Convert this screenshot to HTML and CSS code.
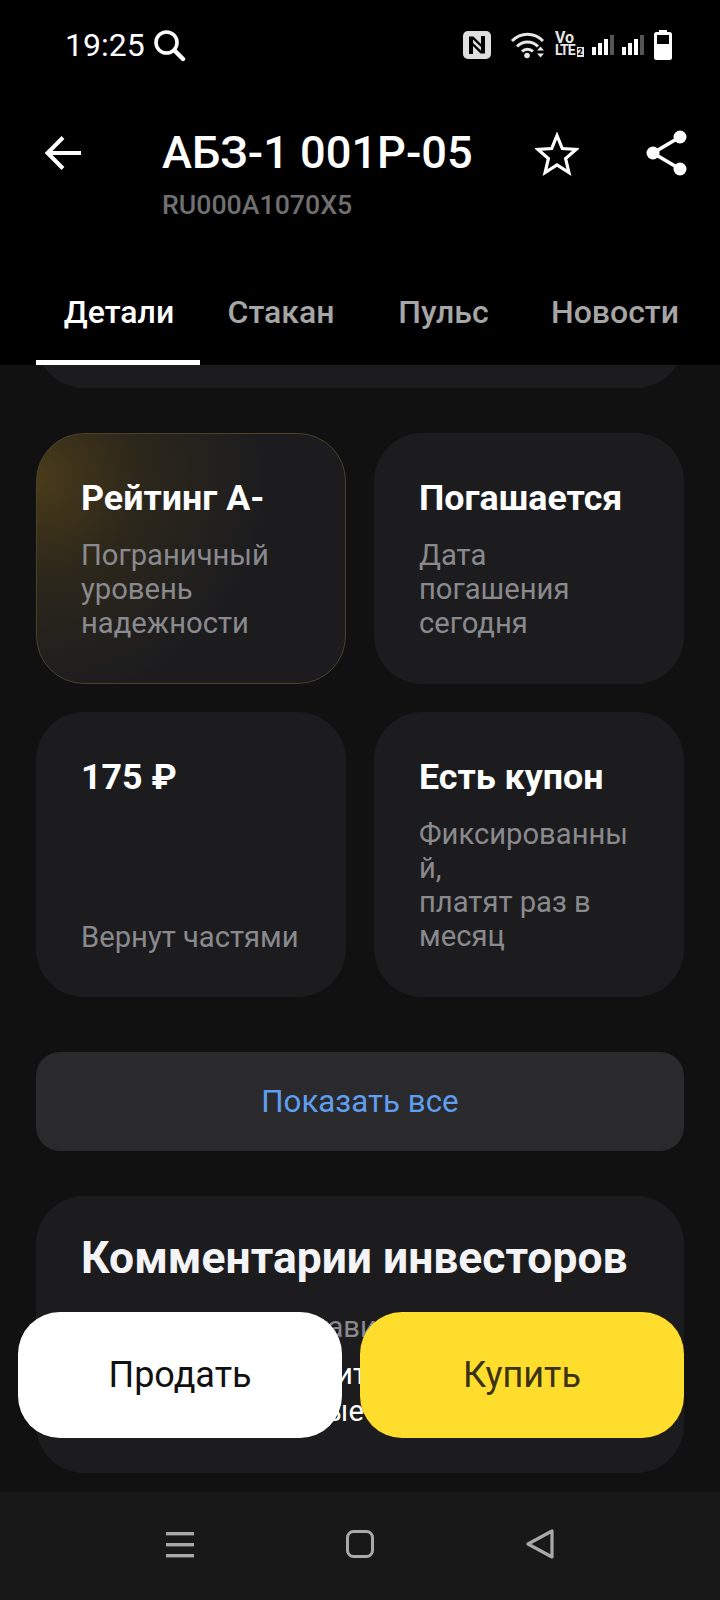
FILE: index.html
```html
<!DOCTYPE html>
<html lang="ru">

<head>
    <meta charset="UTF-8">
    <meta name="viewport" content="width=device-width, initial-scale=1.0">
    <title>АБЗ-1 001Р-05</title>
    <link rel="stylesheet" href="styles.css">
</head>

<body>
    <div class="phone">
        <header class="top">
            <div class="status-bar">
                <div class="status-left">
                    <span class="clock">19:25</span>
                    <svg class="icon-search" width="34" height="34" viewBox="0 0 34 34" fill="none" stroke="#fff" stroke-linecap="round">
                        <circle cx="14.5" cy="14.5" r="10.5" stroke-width="3.6"/>
                        <path d="M22.5 22.5L31 31" stroke-width="4.4"/>
                    </svg>
                </div>
                <div class="status-right">
                    <svg class="icon-nfc" width="28" height="28" viewBox="0 0 28 28">
                        <rect width="28" height="28" rx="5" fill="#dedede"/>
                        <path d="M6 23V5.500h4.500L18 13v3L10 8.500V23zM22 5v17.500h-4.500L10 15v-3l8 7.500V5z" fill="#000"/>
                    </svg>
                    <svg class="icon-wifi" width="35" height="30" viewBox="0 0 35 30" fill="none" stroke="#e6e6e6" stroke-width="3">
                        <path d="M2 11C11 2 24 2 33 11"/>
                        <path d="M7 16.500C13 10.500 22 10.500 28 16.500"/>
                        <path d="M12 21.500C15 18.500 20 18.500 23 21.500"/>
                        <circle cx="17" cy="25.500" r="2.800" fill="#e6e6e6" stroke="none"/>
                        <path d="M27 20.500L30.500 16.500L34 20.500zM27 23.500H34L30.500 27.500z" fill="#e6e6e6" stroke="none"/>
                    </svg>
                    <div class="volte">
                        <span class="vo">Vo</span>
                        <span class="lte">LTE<b>2</b></span>
                    </div>
                    <div class="signal"><i class="s1"></i><i class="s2"></i><i class="s3"></i><i class="s4"></i></div>
                    <div class="signal"><i class="s1"></i><i class="s2"></i><i class="s3"></i><i class="s4"></i></div>
                    <svg class="icon-battery" width="18" height="30" viewBox="0 0 18 30">
                        <path d="M5 0h8v2h2.500A2.500 2.500 0 0 1 18 4.500V27.500A2.500 2.500 0 0 1 15.500 30H2.500A2.500 2.500 0 0 1 0 27.500V4.500A2.500 2.500 0 0 1 2.500 2H5z" fill="#fff"/>
                        <rect x="3" y="5" width="12" height="9" fill="#000"/>
                    </svg>
                </div>
            </div>

            <div class="title-row">
                <svg class="icon-back" width="38" height="36" viewBox="0 0 38 36" fill="none" stroke="#fff" stroke-width="4">
                    <path d="M37 18H4"/>
                    <path d="M19 2.500L3.500 18L19 33.500"/>
                </svg>
                <div class="title-text">
                    <h1>АБЗ-1 001Р-05</h1>
                    <div class="isin">RU000A1070X5</div>
                </div>
                <svg class="icon-star" width="44" height="44" viewBox="0 0 44 44" fill="none" stroke="#fff" stroke-width="3.200">
                    <path d="M22 3.500L27.300 16.500L41 17.500L30.600 26.600L33.900 40.500L22 33L10.100 40.500L13.400 26.600L3 17.500L16.700 16.500Z"/>
                </svg>
                <svg class="icon-share" width="42" height="46" viewBox="0 0 42 46" fill="none">
                    <path d="M34 7L7 23L34 39" stroke="#fff" stroke-width="3.600"/>
                    <circle cx="34" cy="7" r="6.500" fill="#fff"/>
                    <circle cx="7" cy="23" r="6.500" fill="#fff"/>
                    <circle cx="34" cy="39" r="6.500" fill="#fff"/>
                </svg>
            </div>

            <nav class="tabs">
                <a class="tab tab-active">Детали</a>
                <a class="tab tab-book">Стакан</a>
                <a class="tab tab-pulse">Пульс</a>
                <a class="tab tab-news">Новости</a>
            </nav>
        </header>

        <main class="content">
            <div class="card-tail"></div>

            <div class="facts">
                <div class="card card-rating">
                    <div class="card-title">Рейтинг А-</div>
                    <div class="card-text">Пограничный уровень надежности</div>
                </div>
                <div class="card">
                    <div class="card-title">Погашается</div>
                    <div class="card-text">Дата погашения сегодня</div>
                </div>
                <div class="card card-split">
                    <div class="card-title">175 ₽</div>
                    <div class="card-text">Вернут частями</div>
                </div>
                <div class="card">
                    <div class="card-title">Есть купон</div>
                    <div class="card-text">Фиксированный,<br>платят раз в месяц</div>
                </div>
            </div>

            <button class="show-all">Показать все</button>

            <section class="comments">
                <h2>Комментарии инвесторов</h2>
                <p class="comments-note">Здесь сможет оставить отзыв</p>
                <p class="comments-lead">Узнайте, что говорит<br>Смотрите все новые</p>
            </section>

            <div class="actions">
                <button class="btn btn-sell">Продать</button>
                <button class="btn btn-buy">Купить</button>
            </div>
        </main>

        <footer class="nav-bar">
            <svg width="30" height="28" viewBox="0 0 30 28" fill="#a9a9a9">
                <rect x="1" y="2" width="28" height="3.400"/>
                <rect x="1" y="13" width="28" height="3.400"/>
                <rect x="1" y="24" width="28" height="3.400"/>
            </svg>
            <svg width="30" height="30" viewBox="0 0 30 30" fill="none" stroke="#a9a9a9" stroke-width="3">
                <rect x="2.500" y="2.500" width="25" height="25" rx="6"/>
            </svg>
            <svg width="30" height="32" viewBox="0 0 30 32" fill="none" stroke="#a9a9a9" stroke-width="3.200" stroke-linejoin="round">
                <path d="M27 3V29L3 16Z"/>
            </svg>
        </footer>
    </div>
</body>

</html>
```

FILE: styles.css
```css
html, body {
    margin: 0;
    padding: 0;
    background: #000;
    font-family: "Roboto", "Liberation Sans", sans-serif;
    color: #fff;
}

.phone {
    width: 720px;
    height: 1600px;
    display: flex;
    flex-direction: column;
    overflow: hidden;
}

/* шапка */
.top {
    height: 365px;
    background: #000;
    flex-shrink: 0;
}

.status-bar {
    height: 90px;
    display: flex;
    justify-content: space-between;
    align-items: center;
    padding: 0 48px 0 65px;
}

.status-left {
    display: flex;
    align-items: center;
    gap: 7px;
}

.clock {
    font-size: 32px;
}

.status-right {
    display: flex;
    align-items: center;
}

.icon-nfc {
    margin-right: 19px;
}

.icon-wifi {
    margin-right: 10px;
}

.volte {
    display: flex;
    flex-direction: column;
    width: 29px;
    margin-right: 8px;
    color: #e6e6e6;
    font-weight: 700;
    line-height: 13px;
}

.vo {
    font-size: 16px;
}

.lte {
    font-size: 14px;
    letter-spacing: -1px;
    white-space: nowrap;
}

.lte b {
    font-size: 9px;
    margin-left: 2px;
    padding: 0 1px;
    letter-spacing: 0;
    background: #e6e6e6;
    color: #000;
}

.signal {
    display: flex;
    align-items: flex-end;
    gap: 2px;
    height: 20px;
    margin-right: 8px;
}

.signal i {
    display: block;
    width: 4px;
    background: #fff;
}

.signal .s1 { height: 8px; }
.signal .s2 { height: 12px; }
.signal .s3 { height: 16px; }
.signal .s4 { height: 20px; background: #555; }

.icon-battery {
    margin-left: 2px;
}

.title-row {
    height: 120px;
    display: flex;
    align-items: flex-start;
    padding: 40px 32px 0 44px;
}

.icon-back {
    margin-top: 5px;
    margin-right: 80px;
    flex-shrink: 0;
}

.title-text {
    flex: 1;
}

h1 {
    margin: 0;
    font-size: 45.2px;
    font-weight: 500;
    line-height: 46px;
    white-space: nowrap;
}

.isin {
    margin-top: 15px;
    font-size: 26.7px;
    font-weight: 500;
    line-height: 28px;
    color: #707070;
}

.icon-star {
    margin-top: 2px;
    margin-right: 67px;
}

.icon-share {
    margin-top: 0;
}

.tabs {
    display: flex;
    padding-left: 36px;
    margin-top: 27px;
}

.tab {
    height: 88px;
    box-sizing: border-box;
    padding-top: 15px;
    text-align: center;
    font-size: 32px;
    font-weight: 500;
    line-height: 40px;
    color: #a6a6a6;
    white-space: nowrap;
}

.tab-active {
    width: 164px;
    padding-left: 2px;
    color: #fff;
    border-bottom: 5px solid #fff;
}

.tab-book { width: 162px; }
.tab-pulse { width: 163px; }
.tab-news { width: 180px; }

/* контент */
.content {
    position: relative;
    flex: 1;
    overflow: hidden;
    background: #111112;
    padding: 0 36px;
}

.card-tail {
    height: 48px;
    margin-top: -25px;
    background: #1c1c1e;
    border-radius: 0 0 48px 48px;
}

.facts {
    display: grid;
    grid-template-columns: 310px 310px;
    grid-template-rows: 251px 285px;
    gap: 28px;
    margin-top: 45px;
}

.card {
    box-sizing: border-box;
    background: #1c1c1e;
    border-radius: 48px;
    padding: 43px 45px 0;
}

.card-rating {
    border: 1px solid #4a4128;
    padding: 42px 44px 0;
    background: radial-gradient(ellipse 75% 90% at 0 18%, #4a3b1a 0, #2c271b 45%, #1c1c1f 100%);
}

.card-split {
    display: flex;
    flex-direction: column;
    justify-content: space-between;
    padding-bottom: 43px;
}

.card-title {
    font-size: 35.8px;
    font-weight: 700;
    line-height: 44px;
    color: #fff;
}

.card-text {
    margin-top: 18px;
    font-size: 29.2px;
    line-height: 34px;
    color: #8a8a8e;
    overflow-wrap: anywhere;
}

.show-all {
    display: block;
    width: 100%;
    height: 99px;
    margin-top: 55px;
    border: none;
    border-radius: 24px;
    background: #2a2a2c;
    color: #5f9ef0;
    font-family: inherit;
    font-size: 31.3px;
}

.comments {
    box-sizing: border-box;
    height: 277px;
    margin-top: 45px;
    padding: 34px 45px 0;
    background: #1c1c1e;
    border-radius: 48px;
}

h2 {
    margin: 0;
    font-size: 44.4px;
    font-weight: 700;
    line-height: 56px;
    color: #f4f4f6;
    white-space: nowrap;
}

.comments-note {
    margin: 24px 0 0;
    font-size: 29.2px;
    line-height: 34px;
    color: #8a8a8e;
    white-space: nowrap;
}

.comments-lead {
    margin: 12px 0 0;
    font-size: 29.2px;
    line-height: 37px;
    color: #fff;
    white-space: nowrap;
}

/* кнопки поверх контента */
.actions {
    position: absolute;
    left: 18px;
    right: 36px;
    top: 947px;
    display: flex;
    gap: 18px;
}

.btn {
    flex: 1;
    height: 126px;
    border: none;
    border-radius: 42px;
    font-family: inherit;
    font-size: 36px;
}

.btn-sell {
    background: #fff;
    color: #111;
}

.btn-buy {
    background: #ffdd2d;
    color: #3a3315;
}

.nav-bar {
    height: 108px;
    flex-shrink: 0;
    box-sizing: border-box;
    background: #181818;
    display: flex;
    align-items: center;
    padding: 0 165px 4px;
    justify-content: space-between;
}
```
